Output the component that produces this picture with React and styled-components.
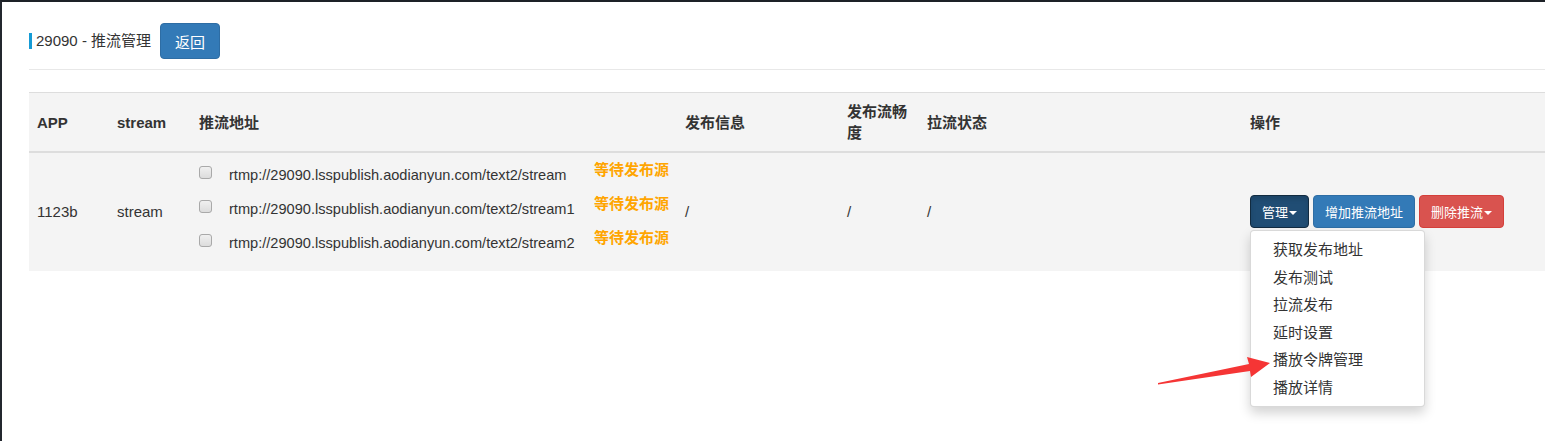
import React from 'react';
import styled, { createGlobalStyle } from 'styled-components';

const GlobalStyle = createGlobalStyle`
  html, body {
    margin: 0;
    padding: 0;
    background: #fff;
  }
  body {
    font-family: "Liberation Sans", "Noto Sans CJK SC", Arial, sans-serif;
    color: #333;
  }
  * {
    box-sizing: border-box;
  }
`

const links = [
  'rtmp://29090.lsspublish.aodianyun.com/text2/stream',
  'rtmp://29090.lsspublish.aodianyun.com/text2/stream1',
  'rtmp://29090.lsspublish.aodianyun.com/text2/stream2',
];

const menuItems = ['获取发布地址', '发布测试', '拉流发布', '延时设置', '播放令牌管理', '播放详情'];

function App() {
  return (
    <Frame>
      <GlobalStyle />
      <TitleBar>
        <Title>29090 - 推流管理</Title>
        <Button>返回</Button>
      </TitleBar>
      <Divider />

      <Table>
        <colgroup>
          <col style={{ width: 80 }} />
          <col style={{ width: 82 }} />
          <col style={{ width: 486 }} />
          <col style={{ width: 162 }} />
          <col style={{ width: 80 }} />
          <col style={{ width: 323 }} />
          <col />
        </colgroup>
        <thead>
          <tr>
            <Th>APP</Th>
            <Th>stream</Th>
            <Th>推流地址</Th>
            <Th>发布信息</Th>
            <Th>发布流畅度</Th>
            <Th>拉流状态</Th>
            <Th>操作</Th>
          </tr>
        </thead>
        <tbody>
          <tr>
            <Td>1123b</Td>
            <Td>stream</Td>
            <Td>
              {links.map((url) => (
                <LinkRow key={url}>
                  <Check type="checkbox" />
                  <Url>{url}</Url>
                  <Status>等待发布源</Status>
                </LinkRow>
              ))}
            </Td>
            <Td>/</Td>
            <Td>/</Td>
            <Td>/</Td>
            <Td>
              <BtnGroup>
                <DropWrap>
                  <SmallButton $kind="active">管理<Caret /></SmallButton>
                  <Menu>
                    {menuItems.map((item) => (
                      <MenuItem key={item}>{item}</MenuItem>
                    ))}
                  </Menu>
                </DropWrap>
                <SmallButton $kind="primary">增加推流地址</SmallButton>
                <SmallButton $kind="danger">删除推流<Caret /></SmallButton>
              </BtnGroup>
            </Td>
          </tr>
        </tbody>
      </Table>

      <Arrow width="130" height="45" viewBox="0 0 130 45">
        <polygon
          points="8,38 99,19 97,12 120,18 101,32 100,26 8,39.5"
          fill="#f53535"
        />
      </Arrow>
    </Frame>
  )
}

export default App

const Frame = styled.div`
  position: relative;
  width: 1545px;
  height: 441px;
  overflow: hidden;
  border-top: 2px solid #1d2127;
  border-left: 2px solid #23272e;
  padding-left: 27px;
`

const TitleBar = styled.div`
  display: flex;
  align-items: center;
  height: 36px;
  margin-top: 21px;
`

const Title = styled.div`
  border-left: 3px solid #169bd5;
  padding-left: 4px;
  font-size: 15px;
  line-height: 16px;
  color: #333;
`

const Button = styled.button`
  margin-left: 9px;
  height: 36px;
  padding: 0 14px;
  font-family: inherit;
  font-size: 15px;
  color: #fff;
  background: #337ab7;
  border: 1px solid #2e6da4;
  border-radius: 4px;
`

const Divider = styled.div`
  height: 1px;
  margin-top: 10px;
  background: #e8e8e8;
`

const Table = styled.table`
  width: 1516px;
  margin-top: 22px;
  border-collapse: collapse;
  table-layout: fixed;
  background: #f4f4f4;
  border-top: 1px solid #dddddd;
`

const Th = styled.th`
  padding: 8px;
  text-align: left;
  vertical-align: middle;
  font-size: 15px;
  line-height: 21px;
  font-weight: bold;
  color: #333;
  border-bottom: 2px solid #dddddd;
`

const Td = styled.td`
  padding: 8px;
  vertical-align: middle;
  font-size: 15px;
  line-height: 20px;
  color: #333;
`

const LinkRow = styled.div`
  display: grid;
  grid-template-columns: 13px 348px auto;
  column-gap: 17px;
  align-items: start;
  height: 34px;
`

const Check = styled.input`
  appearance: none;
  margin: 5px 0 0 0;
  width: 13px;
  height: 13px;
  border: 1px solid #a9a9a9;
  border-radius: 3px;
  background: linear-gradient(#f0f0f0, #dcdcdc);
`

const Url = styled.span`
  margin-top: 4px;
  font-size: 14.6px;
  line-height: 20px;
  color: #333;
  white-space: nowrap;
`

const Status = styled.span`
  margin-top: -1px;
  font-size: 15px;
  line-height: 20px;
  font-weight: bold;
  color: #ffa500;
  white-space: nowrap;
`

const BtnGroup = styled.div`
  display: flex;
  gap: 4px;
  margin-top: -1px;
`

const DropWrap = styled.div`
  position: relative;
`

const kinds = {
  active: { bg: '#204d74', border: '#122b40' },
  primary: { bg: '#337ab7', border: '#2e6da4' },
  danger: { bg: '#d9534f', border: '#d43f3a' },
}

const SmallButton = styled.button`
  display: flex;
  align-items: center;
  height: 33px;
  padding: 0 11px;
  font-family: inherit;
  font-size: 13px;
  color: #fff;
  background: ${(p) => kinds[p.$kind].bg};
  border: 1px solid ${(p) => kinds[p.$kind].border};
  border-radius: 4px;
  box-shadow: ${(p) => (p.$kind === 'active' ? 'inset 0 3px 5px rgba(0,0,0,.125)' : 'none')};
`

const Caret = styled.span`
  display: inline-block;
  margin-left: 1px;
  margin-top: 2px;
  width: 0;
  height: 0;
  border-top: 4px solid #fff;
  border-left: 4px solid transparent;
  border-right: 4px solid transparent;
`

const Menu = styled.ul`
  position: absolute;
  top: 35px;
  left: 0;
  z-index: 2;
  width: 175px;
  margin: 0;
  padding: 5px 0;
  list-style: none;
  background: #fff;
  border: 1px solid rgba(0, 0, 0, 0.15);
  border-radius: 4px;
  box-shadow: 0 6px 12px rgba(0, 0, 0, 0.175);
`

const MenuItem = styled.li`
  padding: 3px 20px 3px 22px;
  font-size: 15px;
  line-height: 21.5px;
  color: #333;
  white-space: nowrap;
`

const Arrow = styled.svg`
  position: absolute;
  left: 1148px;
  top: 343px;
  z-index: 3;
  pointer-events: none;
`
